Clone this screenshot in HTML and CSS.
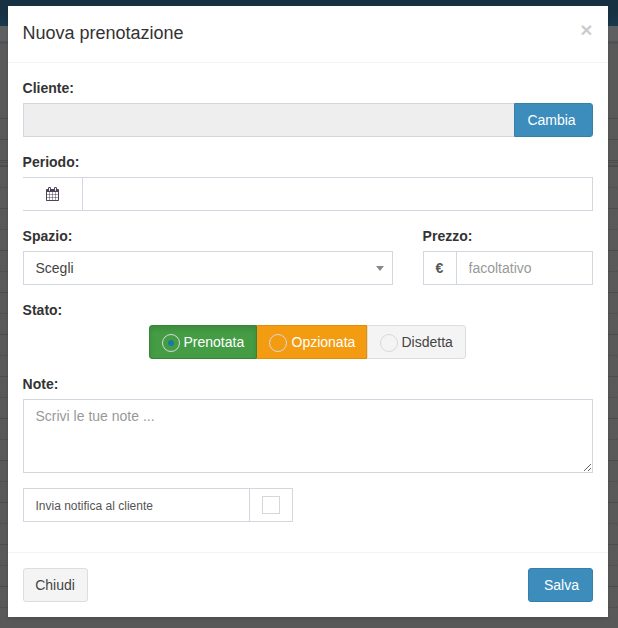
FILE: index.html
```html
<!DOCTYPE html>
<html lang="it">
<head>
<meta charset="utf-8">
<title>Nuova prenotazione</title>
<link rel="stylesheet" href="styles.css">
</head>
<body>
<div class="modal">
  <header class="modal-header">
    <h4 class="modal-title">Nuova prenotazione</h4>
    <button class="close" type="button">×</button>
  </header>
  <div class="modal-body">
    <div class="form-group">
      <label>Cliente:</label>
      <div class="input-group">
        <input class="control disabled" disabled>
        <button class="btn primary joined" type="button">Cambia</button>
      </div>
    </div>
    <div class="form-group">
      <label>Periodo:</label>
      <div class="input-group">
        <span class="addon calendar">
          <svg width="13" height="14" viewBox="0 0 1664 1792"><path fill="#4e4358" d="M128 1664h288v-288h-288v288zm352 0h320v-288h-320v288zm-352-352h288v-320h-288v320zm352 0h320v-320h-320v320zm-352-384h288v-288h-288v288zm736 736h320v-288h-320v288zm-384-736h320v-288h-320v288zm768 736h288v-288h-288v288zm-384-352h320v-320h-320v320zm-352-864v-288q0-13-9.500-22.500t-22.500-9.500h-64q-13 0-22.500 9.500t-9.500 22.500v288q0 13 9.500 22.500t22.500 9.500h64q13 0 22.500-9.500t9.500-22.500zm736 864h288v-320h-288v320zm-384-384h320v-288h-320v288zm384 0h288v-288h-288v288zm32-480v-288q0-13-9.500-22.500t-22.500-9.500h-64q-13 0-22.500 9.500t-9.500 22.500v288q0 13 9.500 22.500t22.500 9.500h64q13 0 22.500-9.500t9.500-22.500zm384-64v1280q0 52-38 90t-90 38h-1408q-52 0-90-38t-38-90v-1280q0-52 38-90t90-38h128v-96q0-66 47-113t113-47h64q66 0 113 47t47 113v96h384v-96q0-66 47-113t113-47h64q66 0 113 47t47 113v96h128q52 0 90 38t38 90z"/></svg>
        </span>
        <input class="control">
      </div>
    </div>
    <div class="row">
      <div class="form-group">
        <label>Spazio:</label>
        <div class="control select"><span>Scegli</span><i class="caret"></i></div>
      </div>
      <div class="form-group">
        <label>Prezzo:</label>
        <div class="input-group">
          <span class="addon euro">€</span>
          <input class="control" placeholder="facoltativo">
        </div>
      </div>
    </div>
    <div class="form-group">
      <label>Stato:</label>
      <div class="states">
        <span class="state booked"><i class="radio checked"></i>Prenotata</span>
        <span class="state optioned"><i class="radio"></i>Opzionata</span>
        <span class="state cancelled"><i class="radio"></i>Disdetta</span>
      </div>
    </div>
    <div class="form-group">
      <label>Note:</label>
      <textarea class="control notes" placeholder="Scrivi le tue note ..."></textarea>
    </div>
    <div class="form-group">
      <div class="input-group notify">
        <span class="control notify-text">Invia notifica al cliente</span>
        <span class="addon check"><i class="checkbox"></i></span>
      </div>
    </div>
  </div>
  <footer class="modal-footer">
    <button class="btn default" type="button">Chiudi</button>
    <button class="btn primary save" type="button">Salva</button>
  </footer>
</div>
</body>
</html>
```
FILE: styles.css
```css
* { box-sizing: border-box; }

/* Dimmed calendar page behind the dialog: top bar, toolbar, grid rows */
body {
  margin: 0;
  height: 628px;
  padding: 6px 10px 0 8px;
  overflow: hidden;
  font: 14px/20px "Liberation Sans", Arial, sans-serif;
  color: #333;
  background:
    linear-gradient(#173142, #173142 12px, #193a4e) 0 0 / 100% 26px no-repeat,
    linear-gradient(#5e5f61, #5e5f61) 0 26px / 100% 15px no-repeat,
    linear-gradient(#515255, #515255) 0 41px / 100% 3px no-repeat,
    linear-gradient(#4c4c4c, #4c4c4c) 0 118px / 100% 1px no-repeat,
    linear-gradient(#4c4c4c, #4c4c4c) 0 139px / 100% 1px no-repeat,
    linear-gradient(#4c4c4c, #4c4c4c) 0 160px / 100% 1px no-repeat,
    linear-gradient(#4c4c4c, #4c4c4c) 0 162px / 100% 1px no-repeat,
    linear-gradient(#4c4c4c, #4c4c4c) 0 165px / 100% 1px no-repeat,
    linear-gradient(#595959, #595959) 0 0 / 100% 166px no-repeat,
    linear-gradient(#4c4c4c 1px, transparent 1px) 0 208px / 100% 42px,
    linear-gradient(transparent 1px, #595959 1px) 0 187px / 100% 42px,
    repeating-linear-gradient(90deg, #4a4a4a 0 1px, #595959 1px 2px);
}

button, input, textarea { font: inherit; outline: 0; }

.modal {
  width: 600px;
  background: #fff;
  box-shadow: 0 2px 3px rgba(0, 0, 0, .125);
}

.modal-header {
  display: flex;
  justify-content: space-between;
  align-items: flex-start;
  height: 57px;
  padding: 15px 15.5px 15px 14.5px;
  border-bottom: 1px solid #f4f4f4;
}

.modal-title { margin: 0; font-size: 18px; font-weight: 400; line-height: 25px; }

.close {
  margin: -2px 0 0;
  padding: 0;
  border: 0;
  background: none;
  font-size: 21px;
  font-weight: 700;
  line-height: 21px;
  text-shadow: 0 1px 0 #fff;
  opacity: .2;
}

.modal-body { padding: 15px; }
.form-group { margin-bottom: 15px; }
label { display: block; margin: 0 0 5px -.4px; font-weight: 700; }
.input-group { display: flex; }

.control {
  display: block;
  flex: 1;
  min-width: 0;
  width: 100%;
  height: 34px;
  padding: 6px 12px 6px 11.5px;
  border: 1px solid #d2d6de;
  border-radius: 0;
  background: #fff;
  color: #555;
}

.control::placeholder { color: #999; opacity: 1; }
.disabled { background: #eee; border-right: 0; }

.addon {
  display: flex;
  align-items: center;
  justify-content: center;
  height: 34px;
  border: 1px solid #d2d6de;
  border-right: 0;
}

.calendar { width: 59px; border-left: 0; }
.euro { width: 33px; padding-right: 1px; color: #555; font-weight: 700; }

.btn {
  height: 34px;
  padding: 0 12px;
  border: 1px solid #ddd;
  border-radius: 3px;
}

.default { width: 65px; padding: 0 1px 0 0; background: #f4f4f4; color: #444; }
.primary { background: #3c8dbc; border-color: #367fa9; color: #fff; }
.joined { width: 79px; padding: 0 4px 0 0; border-radius: 0 3px 3px 0; }
.save { width: 65px; padding: 0 0 0 2px; }

.row { display: grid; grid-template-columns: 370px 170px; gap: 30px; }

.select {
  display: flex;
  align-items: center;
  justify-content: space-between;
  padding-right: 8px;
  color: #444;
}

.caret { border: 4px solid transparent; border-top: 5px solid #888; border-bottom: 0; }

.states { display: flex; justify-content: center; padding-right: 1px; margin-right: 1px; }

.state {
  display: flex;
  align-items: center;
  height: 34px;
  padding-left: 12px;
  border: 1px solid;
}

.booked {
  width: 108px;
  border-color: #398439;
  border-radius: 3px 0 0 3px;
  background: #449d44;
  color: #fff;
  box-shadow: inset 0 3px 5px rgba(0, 0, 0, .125);
}

.optioned { width: 110px; background: #f39c12; border-color: #e08e0b; border-left-color: #f39c12; color: #fff; }
.cancelled { width: 99px; background: #f4f4f4; border-color: #ddd; border-radius: 0 3px 3px 0; color: #444; }

.radio {
  display: grid;
  place-items: center;
  width: 18px;
  height: 18px;
  margin: 2px 4px 0 0;
  border: 1px solid #d9d9d9;
  border-radius: 50%;
}

.optioned .radio { margin-left: -1px; margin-right: 5px; }
.checked::after { content: ""; width: 6px; height: 6px; border-radius: 50%; background: #1978a8; }

.notes { height: 74px; resize: vertical; }
.notify { width: 270px; }
.notify-text { padding-top: 7px; padding-bottom: 5px; font-size: 12px; border-right: 0; }
.check { width: 44px; padding-right: 1px; border-right: 1px solid #d2d6de; }
.checkbox { width: 18px; height: 18px; border: 1px solid #d6d6d6; }

.modal-footer {
  display: flex;
  justify-content: space-between;
  height: 65px;
  padding: 15px;
  border-top: 1px solid #f4f4f4;
}
```
